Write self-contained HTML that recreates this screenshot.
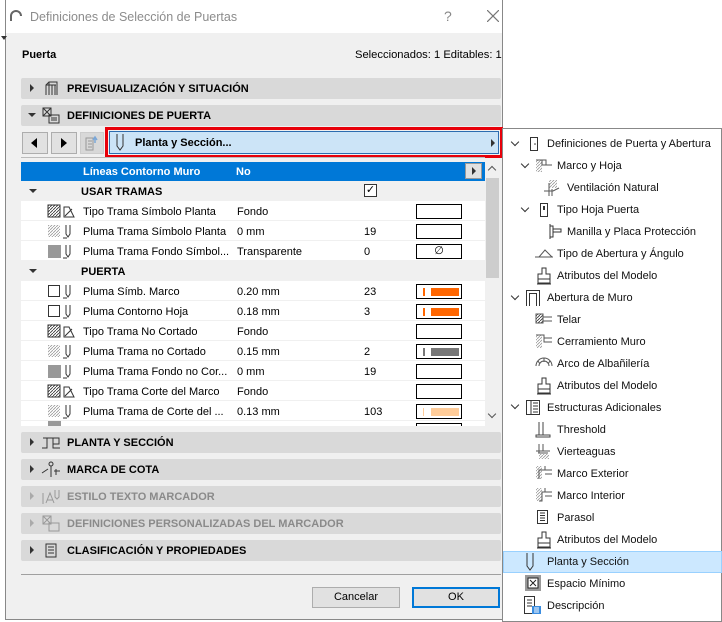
<!DOCTYPE html>
<html><head><meta charset="utf-8"><style>
*{box-sizing:border-box;margin:0;padding:0}
body{width:722px;height:622px;background:#fff;position:relative;overflow:hidden;font-family:"Liberation Sans",sans-serif;font-size:11px;color:#000}
.a{position:absolute}
.dlg{left:5px;top:0;width:498px;height:620px;background:#f0f0f0;border:1px solid #888;border-top:none}
.title{left:6px;top:0;width:496px;height:33px;background:#fff}
.sec{position:absolute;left:21px;width:480px;height:21px;background:#d9d9d9;border-radius:2px}
.sec .t{position:absolute;left:46px;top:5px;font-weight:bold;font-size:11px}
.sec .tri{position:absolute;left:9px;top:6px;width:0;height:0;border-left:4px solid #333;border-top:4px solid transparent;border-bottom:4px solid transparent}
.sec.dis .t{color:#8a8a8a}.sec.dis .tri{border-left-color:#aaa}
.row{position:absolute;left:21px;width:464px;height:20px;background:#fff;border-bottom:1px solid #f0f0f0}
.row span{position:absolute;top:5px}
.sw{position:absolute;left:395px;top:3px;width:46px;height:15px;border:1px solid #000;background:#fff}
.it{position:absolute;height:22px;font-size:11px;color:#111;line-height:23px}
.chev{position:absolute;width:6px;height:6px;border-right:1.5px solid #333;border-bottom:1.5px solid #333;transform:rotate(45deg)}
</style></head><body>
<div class="a dlg"></div>
<div class="a title"></div>
<svg class="a" style="left:9px;top:10px" width="14" height="12"><path d="M2 11 V6 A5 5 0 0 1 12 6" fill="none" stroke="#666" stroke-width="2"/></svg>
<div class="a" style="left:30px;top:10px;font-size:12.5px;color:#8c8c8c">Definiciones de Selección de Puertas</div>
<div class="a" style="left:444px;top:8px;font-size:14px;color:#888">?</div>
<svg class="a" style="left:487px;top:10px" width="12" height="12"><path d="M0 0L12 12M12 0L0 12" stroke="#777" stroke-width="1.2"/></svg>
<div class="a" style="left:1px;top:36px;width:0;height:0;border-top:4px solid #333;border-left:3px solid transparent;border-right:3px solid transparent"></div>
<div class="a" style="left:22px;top:49px;font-weight:bold">Puerta</div>
<div class="a" style="left:355px;top:49px;font-size:11.2px">Seleccionados: 1 Editables: 1</div>

<div class="sec" style="top:78px"><div class="tri"></div><svg class="a" style="left:23px;top:3px" width="14" height="15"><path d="M2 14V4L5 1H13V14M5 1V14M8 4V14M11 4V14M2 4H12" fill="none" stroke="#333"/></svg><div class="t">PREVISUALIZACIÓN Y SITUACIÓN</div></div>
<div class="sec" style="top:105px"><div class="a" style="left:7px;top:8px;border-top:4px solid #333;border-left:4px solid transparent;border-right:4px solid transparent"></div><svg class="a" style="left:20px;top:2px" width="19" height="17"><rect x="2" y="1" width="8" height="8" fill="none" stroke="#333"/><path d="M2 1L10 9M10 1L2 9M8 8H18V16H8Z" fill="none" stroke="#333"/><path d="M10 11H16M10 13H16" stroke="#333"/></svg><div class="t">DEFINICIONES DE PUERTA</div></div>

<div class="a" style="left:22px;top:132px;width:26px;height:22px;border:1px solid #adadad;background:#e1e1e1"></div>
<div class="a" style="left:31px;top:138px;border-right:6px solid #000;border-top:5px solid transparent;border-bottom:5px solid transparent"></div>
<div class="a" style="left:51px;top:132px;width:26px;height:22px;border:1px solid #adadad;background:#e1e1e1"></div>
<div class="a" style="left:61px;top:138px;border-left:6px solid #000;border-top:5px solid transparent;border-bottom:5px solid transparent"></div>
<div class="a" style="left:80px;top:132px;width:24px;height:22px;border:1px solid #ccc;background:#d8d8d8"></div>
<svg class="a" style="left:84px;top:135px" width="18" height="16"><path d="M2 3H9V15H2Z M4 6H8M4 9H8M4 12H8" fill="none" stroke="#999"/><path d="M11 8V3M9 5L11 2L13 5" stroke="#7aa7d8" fill="none" stroke-width="1.5"/></svg>
<div class="a" style="left:105px;top:127px;width:398px;height:31px;border:3px solid #e8000a"></div>
<div class="a" style="left:109px;top:131px;width:390px;height:23px;background:#cce4f7;border:1px solid #2c6cb0"></div>
<svg class="a" style="left:115px;top:133px" width="10" height="19"><path d="M2 1V13L5 17L8 13V1" fill="none" stroke="#333"/></svg>
<div class="a" style="left:135px;top:137px;font-weight:bold">Planta y Sección...</div>
<div class="a" style="left:491px;top:139px;border-left:4px solid #333;border-top:4px solid transparent;border-bottom:4px solid transparent"></div>
<div class="a" style="left:21px;top:157px;width:464px;height:1px;background:#bbb"></div>

<div class="a" style="left:21px;top:162px;width:464px;height:19px;background:#0078d7"></div>
<div class="a" style="left:83px;top:166px;color:#fff;font-weight:bold">Líneas Contorno Muro</div>
<div class="a" style="left:236px;top:166px;color:#fff;font-weight:bold">No</div>
<div class="a" style="left:465px;top:163px;width:17px;height:16px;background:#e1e1e1;border:1px solid #999"></div>
<div class="a" style="left:472px;top:167px;border-left:4px solid #333;border-top:4px solid transparent;border-bottom:4px solid transparent"></div>
<div class="a" style="left:485px;top:162px;width:15px;height:264px;background:#f0f0f0"></div>
<div class="a" style="left:486px;top:178px;width:13px;height:100px;background:#cdcdcd"></div>
<div class="a" style="left:489px;top:167px;width:6px;height:6px;border-left:1.5px solid #555;border-top:1.5px solid #555;transform:rotate(45deg)"></div>
<div class="a" style="left:489px;top:411px;width:6px;height:6px;border-right:1.5px solid #555;border-bottom:1.5px solid #555;transform:rotate(45deg)"></div>

<div class="row" style="top:181px;background:#f0f0f0"><div class="a" style="left:8px;top:8px;border-top:4px solid #333;border-left:4px solid transparent;border-right:4px solid transparent"></div><span style="left:60px;font-weight:bold">USAR TRAMAS</span><div class="a" style="left:343px;top:3px;width:13px;height:13px;border:1px solid #333;background:#fff;font-size:11px;line-height:11px;text-align:center">✓</div></div>

<svg width="0" height="0" style="position:absolute"><defs>
<pattern id="h" width="3" height="3" patternUnits="userSpaceOnUse"><path d="M0 3L3 0" stroke="#333" stroke-width=".8"/></pattern>
<pattern id="hl" width="3" height="3" patternUnits="userSpaceOnUse"><path d="M0 3L3 0" stroke="#999" stroke-width=".8"/></pattern>
</defs></svg>

<div class="row" style="top:201px"><svg class="a" style="left:26px;top:3px" width="34" height="15"><rect x="1" y="1" width="12" height="12" fill="url(#h)" stroke="#333"/><path d="M17 3H22L27 13H17Z M18 12L25 5" fill="none" stroke="#333"/></svg><span style="left:62px">Tipo Trama Símbolo Planta</span><span style="left:216px">Fondo</span><div class="sw"></div></div>
<div class="row" style="top:221px"><svg class="a" style="left:26px;top:3px" width="34" height="15"><rect x="1" y="1" width="12" height="12" fill="url(#hl)"/><path d="M19 1V10L21 13L23 10V1M16 14H20" fill="none" stroke="#333"/></svg><span style="left:62px">Pluma Trama Símbolo Planta</span><span style="left:216px">0 mm</span><span style="left:343px">19</span><div class="sw"></div></div>
<div class="row" style="top:241px"><svg class="a" style="left:26px;top:3px" width="34" height="15"><rect x="1" y="1" width="13" height="13" fill="#999"/><path d="M19 1V10L21 13L23 10V1M16 14H20" fill="none" stroke="#333"/></svg><span style="left:62px">Pluma Trama Fondo Símbol...</span><span style="left:216px">Transparente</span><span style="left:343px">0</span><div class="sw" style="text-align:center;line-height:12px">∅</div></div>
<div class="row" style="top:261px;background:#f0f0f0"><div class="a" style="left:8px;top:8px;border-top:4px solid #333;border-left:4px solid transparent;border-right:4px solid transparent"></div><span style="left:60px;font-weight:bold">PUERTA</span></div>
<div class="row" style="top:281px"><svg class="a" style="left:26px;top:3px" width="34" height="15"><rect x="1.5" y="1.5" width="11" height="11" fill="none" stroke="#333"/><path d="M19 1V10L21 13L23 10V1M16 14H20" fill="none" stroke="#333"/></svg><span style="left:62px">Pluma Símb. Marco</span><span style="left:216px">0.20 mm</span><span style="left:343px">23</span><div class="sw"><div class="a" style="left:6px;top:3px;width:2px;height:8px;background:#f60"></div><div class="a" style="left:14px;top:3px;width:28px;height:8px;background:#f60"></div></div></div>
<div class="row" style="top:301px"><svg class="a" style="left:26px;top:3px" width="34" height="15"><rect x="1.5" y="1.5" width="11" height="11" fill="none" stroke="#333"/><path d="M19 1V10L21 13L23 10V1M16 14H20" fill="none" stroke="#333"/></svg><span style="left:62px">Pluma Contorno Hoja</span><span style="left:216px">0.18 mm</span><span style="left:343px">3</span><div class="sw"><div class="a" style="left:6px;top:3px;width:2px;height:8px;background:#f60"></div><div class="a" style="left:14px;top:3px;width:28px;height:8px;background:#f60"></div></div></div>
<div class="row" style="top:321px"><svg class="a" style="left:26px;top:3px" width="34" height="15"><rect x="1" y="1" width="12" height="12" fill="url(#h)" stroke="#333"/><path d="M17 3H22L27 13H17Z M18 12L25 5" fill="none" stroke="#333"/></svg><span style="left:62px">Tipo Trama No Cortado</span><span style="left:216px">Fondo</span><div class="sw"></div></div>
<div class="row" style="top:341px"><svg class="a" style="left:26px;top:3px" width="34" height="15"><rect x="1" y="1" width="12" height="12" fill="url(#hl)"/><path d="M19 1V10L21 13L23 10V1M16 14H20" fill="none" stroke="#333"/></svg><span style="left:62px">Pluma Trama no Cortado</span><span style="left:216px">0.15 mm</span><span style="left:343px">2</span><div class="sw"><div class="a" style="left:6px;top:3px;width:2px;height:8px;background:#777"></div><div class="a" style="left:14px;top:3px;width:28px;height:8px;background:#777"></div></div></div>
<div class="row" style="top:361px"><svg class="a" style="left:26px;top:3px" width="34" height="15"><rect x="1" y="1" width="13" height="13" fill="#999"/><path d="M19 1V10L21 13L23 10V1M16 14H20" fill="none" stroke="#333"/></svg><span style="left:62px">Pluma Trama Fondo no Cor...</span><span style="left:216px">0 mm</span><span style="left:343px">19</span><div class="sw"></div></div>
<div class="row" style="top:381px"><svg class="a" style="left:26px;top:3px" width="34" height="15"><rect x="1" y="1" width="12" height="12" fill="url(#h)" stroke="#333"/><path d="M17 3H22L27 13H17Z M18 12L25 5" fill="none" stroke="#333"/></svg><span style="left:62px">Tipo Trama Corte del Marco</span><span style="left:216px">Fondo</span><div class="sw"></div></div>
<div class="row" style="top:401px"><svg class="a" style="left:26px;top:3px" width="34" height="15"><rect x="1" y="1" width="12" height="12" fill="url(#hl)"/><path d="M19 1V10L21 13L23 10V1M16 14H20" fill="none" stroke="#333"/></svg><span style="left:62px">Pluma Trama de Corte del ...</span><span style="left:216px">0.13 mm</span><span style="left:343px">103</span><div class="sw"><div class="a" style="left:6px;top:3px;width:1px;height:8px;background:#fc9"></div><div class="a" style="left:14px;top:3px;width:28px;height:8px;background:#fc9"></div></div></div>
<div class="row" style="top:421px;height:6px;overflow:hidden"><div class="a" style="left:27px;top:0;width:13px;height:6px;background:#999"></div><div class="a" style="left:395px;top:2px;width:46px;height:6px;border:1px solid #000"></div></div>

<div class="sec" style="top:432px"><div class="tri"></div><svg class="a" style="left:20px;top:4px" width="20" height="13"><path d="M1 12H6V2H12V8H18V2H12M12 8V12H19M2 2H6" fill="none" stroke="#333"/></svg><div class="t">PLANTA Y SECCIÓN</div></div>
<div class="sec" style="top:459px"><div class="tri"></div><svg class="a" style="left:20px;top:2px" width="20" height="17"><circle cx="10" cy="3" r="2" fill="none" stroke="#333"/><path d="M10 5V16M1 12L7 8M13 10H19M15 8V14" fill="none" stroke="#333"/></svg><div class="t">MARCA DE COTA</div></div>
<div class="sec dis" style="top:486px"><div class="tri"></div><svg class="a" style="left:20px;top:3px" width="20" height="16"><path d="M2 4V15M5 14L9 4L13 14M6 11H12M14 1V8L16 10L18 8V1" fill="none" stroke="#999"/></svg><div class="t">ESTILO TEXTO MARCADOR</div></div>
<div class="sec dis" style="top:513px"><div class="tri"></div><svg class="a" style="left:20px;top:2px" width="19" height="17"><rect x="2" y="1" width="8" height="8" fill="none" stroke="#999"/><path d="M2 1L10 9M10 1L2 9M8 8H18V16H8Z" fill="none" stroke="#999"/></svg><div class="t">DEFINICIONES PERSONALIZADAS DEL MARCADOR</div></div>
<div class="sec" style="top:540px"><div class="tri"></div><svg class="a" style="left:23px;top:3px" width="14" height="15"><path d="M2 1H12V14H2Z M4 4H10M4 7H10M4 10H10" fill="none" stroke="#333"/></svg><div class="t">CLASIFICACIÓN Y PROPIEDADES</div></div>

<div class="a" style="left:21px;top:574px;width:480px;height:1px;background:#a0a0a0"></div>
<div class="a" style="left:312px;top:587px;width:88px;height:21px;background:#e1e1e1;border:1px solid #adadad;text-align:center;line-height:19px">Cancelar</div>
<div class="a" style="left:412px;top:587px;width:88px;height:21px;background:#e1e1e1;border:2px solid #0078d7;text-align:center;line-height:17px">OK</div>

<div class="a" style="left:502px;top:128px;width:220px;height:494px;background:#fff;border:1px solid #888"></div>
<div class="a" style="left:503px;top:551px;width:219px;height:22px;background:#cce8ff;border:1px solid #99d1ff"></div>

<div class="chev" style="left:512px;top:139px"></div>
<svg class="a" style="left:529px;top:136px" width="10" height="16"><rect x="1.5" y="1.5" width="7" height="13" fill="none" stroke="#333"/><circle cx="6" cy="8" r=".8" fill="#333"/></svg>
<div class="it" style="left:547px;top:133px">Definiciones de Puerta y Abertura</div>
<div class="chev" style="left:522px;top:161px"></div>
<svg class="a" style="left:534px;top:158px" width="20" height="16"><rect x="2" y="2" width="6" height="12" fill="url(#hl)"/><path d="M2 2H8V7H18M8 2H12V7" fill="none" stroke="#555"/></svg>
<div class="it" style="left:557px;top:155px">Marco y Hoja</div>
<svg class="a" style="left:543px;top:179px" width="20" height="18"><rect x="6" y="1" width="8" height="8" fill="url(#hl)"/><path d="M6 4V17M9 10V17M1 12H10L16 9" fill="none" stroke="#555"/></svg>
<div class="it" style="left:567px;top:177px">Ventilación Natural</div>
<div class="chev" style="left:522px;top:205px"></div>
<svg class="a" style="left:539px;top:202px" width="10" height="16"><rect x="1.5" y="1.5" width="7" height="13" fill="none" stroke="#333"/><rect x="4" y="4" width="2" height="4" fill="#333"/></svg>
<div class="it" style="left:557px;top:199px">Tipo Hoja Puerta</div>
<svg class="a" style="left:547px;top:223px" width="16" height="17"><path d="M3 1V16M3 3H6V14H3M6 6H14V9H6" fill="none" stroke="#333"/></svg>
<div class="it" style="left:567px;top:221px">Manilla y Placa Protección</div>
<svg class="a" style="left:534px;top:246px" width="20" height="14"><path d="M1 11H19M5 11L11 4L18 11" fill="none" stroke="#555"/></svg>
<div class="it" style="left:557px;top:243px">Tipo de Abertura y Ángulo</div>
<svg class="a" style="left:535px;top:267px" width="18" height="18"><path d="M7 1H11V7H15V12H3V7H7Z M3 12V16H15V12M2 17H16" fill="none" stroke="#333"/></svg>
<div class="it" style="left:557px;top:265px">Atributos del Modelo</div>
<div class="chev" style="left:512px;top:293px"></div>
<svg class="a" style="left:525px;top:289px" width="16" height="18"><path d="M1.5 17V1.5H14.5V17M4.5 17V4.5H11.5V17" fill="none" stroke="#333"/></svg>
<div class="it" style="left:547px;top:287px">Abertura de Muro</div>
<svg class="a" style="left:534px;top:312px" width="20" height="14"><rect x="2" y="2" width="7" height="9" fill="url(#h)" stroke="#555"/><path d="M9 5H18M9 9H18" stroke="#555"/></svg>
<div class="it" style="left:557px;top:309px">Telar</div>
<svg class="a" style="left:534px;top:333px" width="20" height="16"><rect x="2" y="2" width="6" height="13" fill="url(#hl)"/><path d="M2 2H10V9H18M10 5H18" fill="none" stroke="#555"/></svg>
<div class="it" style="left:557px;top:331px">Cerramiento Muro</div>
<svg class="a" style="left:534px;top:356px" width="20" height="12"><path d="M2 10A8 8 0 0 1 18 10M5 10A5 5 0 0 1 15 10M4 5L6 8M10 2V6M16 5L14 8" fill="none" stroke="#555"/></svg>
<div class="it" style="left:557px;top:353px">Arco de Albañilería</div>
<svg class="a" style="left:535px;top:377px" width="18" height="18"><path d="M7 1H11V7H15V12H3V7H7Z M3 12V16H15V12M2 17H16" fill="none" stroke="#333"/></svg>
<div class="it" style="left:557px;top:375px">Atributos del Modelo</div>
<div class="chev" style="left:512px;top:402px"></div>
<svg class="a" style="left:525px;top:399px" width="16" height="17"><path d="M1.5 1.5H14.5V15.5H1.5Z M6 1.5V15.5 M8 4H13M8 7H13M8 10H13M8 13H13" fill="none" stroke="#333"/></svg>
<div class="it" style="left:547px;top:397px">Estructuras Adicionales</div>
<svg class="a" style="left:534px;top:421px" width="18" height="17"><path d="M5 1V14M9 1V14M2 14H16V16H2Z" fill="none" stroke="#444"/></svg>
<div class="it" style="left:557px;top:419px">Threshold</div>
<svg class="a" style="left:534px;top:443px" width="18" height="17"><path d="M5 1V10M9 1V8M2 8H16M4 10H14" fill="none" stroke="#555"/><rect x="5" y="11" width="10" height="5" fill="url(#hl)"/></svg>
<div class="it" style="left:557px;top:441px">Vierteaguas</div>
<svg class="a" style="left:534px;top:464px" width="20" height="17"><rect x="2" y="2" width="6" height="13" fill="url(#hl)"/><path d="M5 15V6H11V2M11 6H18M11 10H18" fill="none" stroke="#555"/></svg>
<div class="it" style="left:557px;top:463px">Marco Exterior</div>
<svg class="a" style="left:534px;top:486px" width="20" height="17"><rect x="2" y="2" width="6" height="13" fill="url(#hl)"/><path d="M5 15H8V6H11V2M11 6H18M11 10H18" fill="none" stroke="#555"/></svg>
<div class="it" style="left:557px;top:485px">Marco Interior</div>
<svg class="a" style="left:536px;top:509px" width="14" height="16"><path d="M1.5 1.5H11.5V14.5H1.5Z M4 4H9M4 6.5H9M4 9H9M4 11.5H9" fill="none" stroke="#333"/></svg>
<div class="it" style="left:557px;top:507px">Parasol</div>
<svg class="a" style="left:535px;top:531px" width="18" height="18"><path d="M7 1H11V7H15V12H3V7H7Z M3 12V16H15V12M2 17H16" fill="none" stroke="#333"/></svg>
<div class="it" style="left:557px;top:529px">Atributos del Modelo</div>
<svg class="a" style="left:525px;top:552px" width="10" height="20"><path d="M2 1V14L5 18L8 14V1" fill="none" stroke="#333"/></svg>
<div class="it" style="left:547px;top:551px">Planta y Sección</div>
<svg class="a" style="left:525px;top:575px" width="16" height="16"><rect x="0" y="0" width="16" height="16" fill="#999"/><rect x="3" y="3" width="10" height="10" fill="#fff" stroke="#222"/><path d="M5 5L11 11M11 5L5 11" stroke="#222"/></svg>
<div class="it" style="left:547px;top:573px">Espacio Mínimo</div>
<svg class="a" style="left:523px;top:595px" width="20" height="20"><path d="M1.5 1.5H11.5V18.5H1.5Z M4 5H9M4 8H9M4 11H9" fill="none" stroke="#333"/><rect x="9" y="11" width="9" height="8" fill="#3b8de0"/><path d="M11 13H16M11 15H16M11 17H16" stroke="#fff"/></svg>
<div class="it" style="left:547px;top:595px">Descripción</div>
</body></html>
